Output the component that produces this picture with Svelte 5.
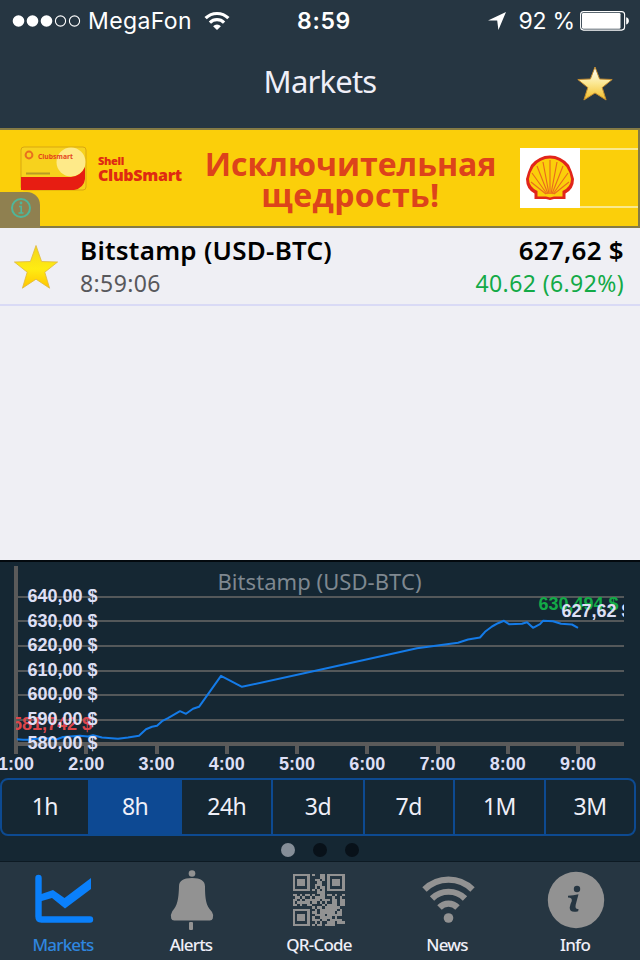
<script lang="ts">
  type Tab = 'markets' | 'alerts' | 'qr' | 'news' | 'info';

  const ranges = [
    { label: '1h', width: 86 },
    { label: '8h', width: 93 },
    { label: '24h', width: 91 },
    { label: '3d', width: 92 },
    { label: '7d', width: 90 },
    { label: '1M', width: 92 },
    { label: '3M', width: 90 }
  ];
  let activeRange = '8h';

  const tabs: { id: Tab; label: string }[] = [
    { id: 'markets', label: 'Markets' },
    { id: 'alerts', label: 'Alerts' },
    { id: 'qr', label: 'QR-Code' },
    { id: 'news', label: 'News' },
    { id: 'info', label: 'Info' }
  ];
  let activeTab: Tab = 'markets';

  const prices = [640, 630, 620, 610, 600, 590, 580];
  const hours = [1, 2, 3, 4, 5, 6, 7, 8, 9];

  const priceY = (price: number) => 182 - (price - 580) * 2.45;
  const hourX = (hour: number) => 16.5 + (hour - 1) * 70.25;

  const line = [
    [17, 177.7], [23, 178.3], [28, 178.3], [43, 176.5], [57, 177.7], [63, 175.5],
    [80, 174.3], [88, 175], [93, 173.7], [102, 176], [118, 177.3], [128, 176],
    [139, 174.3], [146, 167.7], [152, 165.3], [157, 164.3], [162, 159.7], [168, 156.7],
    [180, 149.7], [186, 152.3], [193, 147.3], [199, 145.3], [221, 114.3], [242, 125.3],
    [320, 108.3], [417, 86.7], [458, 81.3], [468, 78], [480, 76], [485, 70.3],
    [492, 65], [498, 61.7], [504, 59.3], [509, 62.7], [522, 62.3], [527, 60.7],
    [533, 66.3], [540, 62.7], [543, 59.3], [553, 59.7], [561, 62.3], [572, 63], [578, 66.3]
  ].map(([x, y]) => `${x},${y - 0.5}`).join(' ');

  const qr = [
    '#######.#..##.#######',
    '#.....#....##.#.....#',
    '#.###.#..##.#.#.###.#',
    '#.###.#...##..#.###.#',
    '#.###.#..###..#.###.#',
    '#.....#..#.##.#.....#',
    '#######.#.#.#.#######',
    '..........###........',
    '##.#.##.#..##.##.#..#',
    '.##.#..#.####...#..#.',
    '##.#.######.###.##.##',
    '#.#####.##.#.#..##.##',
    '##.#..##....#.####.##',
    '........#.##.######..',
    '#######..#.#######.#.',
    '#.....#.##.######.##.',
    '#.###.#..####.######.',
    '#.###.#.#..#####.#...',
    '#.###.#.###.##.#####.',
    '#.....#..#.#..###.###',
    '#######.#.##.####....'
  ];

  // outer ends of the grooves on the shell
  const ribs = [[11, 34], [12, 25], [17, 18], [23, 14], [30, 12], [37, 14], [43, 18], [48, 25], [49, 34]];
</script>

<div class="screen">
  <header>
    <div class="status">
      <div class="carrier">
        <svg width="69" height="14" viewBox="0 0 69 14">
          {#each [0, 1, 2, 3, 4] as i}
            {#if i < 3}
              <circle cx={6.5 + i * 14} cy="7" r="5.8" fill="#fff" />
            {:else}
              <circle cx={6.5 + i * 14} cy="7" r="5.1" fill="none" stroke="#fff" stroke-width="1.1" />
            {/if}
          {/each}
        </svg>
        <span>MegaFon</span>
        <svg width="26" height="20" viewBox="0 0 26 20" fill="none" stroke="#fff" stroke-width="3.2">
          <path d="M1.6 7.2a16.2 16.2 0 0 1 22.8 0" />
          <path d="M5.9 11.6a10 10 0 0 1 14.2 0" />
          <path d="M13 19l-3.900-3.800a5.500 5.500 0 0 1 7.800 0z" fill="#fff" stroke="none" />
        </svg>
      </div>
      <div class="clock">8:59</div>
      <div class="power">
        <svg width="20" height="20" viewBox="0 0 20 20"><path d="M19 1L1 9.600h9.200L11.400 19z" fill="#fff" /></svg>
        <span>92 %</span>
        <svg width="50" height="20" viewBox="0 0 50 20">
          <rect x="0.6" y="0.6" width="44" height="18.5" rx="3" fill="none" stroke="#fff" stroke-width="1.1" />
          <rect x="2" y="2" width="38.5" height="15.7" rx="1.2" fill="#fff" />
          <path d="M46.200 6.200c3.600.8 3.600 6.400 0 7.200z" fill="#fff" />
        </svg>
      </div>
    </div>
    <div class="nav">
      <h1>Markets</h1>
      <svg class="fav" width="38" height="38" viewBox="0 0 38 38">
        <defs>
          <linearGradient id="gold" x1="0" y1="0" x2="0" y2="1">
            <stop offset="0" stop-color="#fff" />
            <stop offset="0.5" stop-color="#fbe791" />
            <stop offset="1" stop-color="#f3be28" />
          </linearGradient>
        </defs>
        <path d="M19 2l4.600 12 12.600.5-10 8.100 3.900 12.400L19 28 7.900 35l3.900-12.400-10-8.100 12.600-.5z" fill="url(#gold)" stroke="#c28b2e" stroke-width="1" />
      </svg>
    </div>
  </header>

  <div class="banner">
    <svg class="card" width="68" height="46" viewBox="0 0 68 46">
      <rect x="1" y="1" width="65" height="43" rx="3" fill="#f7d21d" stroke="#d9a711" />
      <circle cx="51" cy="16" r="14.5" fill="#fff0a5" opacity="0.8" />
      <path d="M1 31h50q10-1 14-10v12q-1 9-11 11H1z" fill="#e71d12" />
      <circle cx="9" cy="9" r="3.400" fill="none" stroke="#e9701f" stroke-width="2" />
      <text x="18" y="13" font-size="7.500" font-weight="bold" fill="#e4441b" textLength="35" lengthAdjust="spacingAndGlyphs">Clubsmart</text>
      <path d="M6 27.500h24" stroke="#b89b23" stroke-width="2" />
    </svg>
    <div class="club"><small>Shell</small><span>ClubSmart</span></div>
    <div class="slogan"><span>Исключительная</span><span class="second">щедрость!</span></div>
    <div class="pecten">
      <svg width="60" height="60" viewBox="0 0 60 60">
        <path d="M14.500 51v-5.500Q6 41 6 31 8 23 11 17 19 7.500 30 7.500T49 17q3 6 5 14 0 10-8.500 14.500V51H34l-4 1-4-1z" fill="#e1251b" />
        <path d="M17.500 48.500v-5.500Q9 39 9 31q1-7 4.500-12Q20 10.500 30 10.500T46.500 19Q50 24 51 31q0 8-8.500 12v5.500H34l-4 1-4-1z" fill="#fbcf0a" />
        {#each ribs as [x, y], i}
          <line x1={26 + i} y1="46" x2={x} y2={y} stroke="#ea6a1e" stroke-width="1.1" />
        {/each}
      </svg>
    </div>
    <div class="lines"></div>
    <div class="adinfo">
      <svg width="22" height="22" viewBox="0 0 22 22">
        <circle cx="11" cy="11" r="9" fill="none" stroke="#4fb69a" stroke-width="2" />
        <path d="M9 9.500h2.200v6.500M8.500 16h5" fill="none" stroke="#4fb69a" stroke-width="1.600" />
        <circle cx="11" cy="6" r="1.400" fill="#4fb69a" />
      </svg>
    </div>
  </div>

  <main>
    <div class="market">
      <svg width="48" height="48" viewBox="0 0 48 48">
        <defs>
          <linearGradient id="yellow" x1="0" y1="0" x2="0" y2="1">
            <stop offset="0" stop-color="#f2d51c" />
            <stop offset="0.55" stop-color="#ffec12" />
            <stop offset="1" stop-color="#ffc400" />
          </linearGradient>
        </defs>
        <path d="M24 1.500l5.600 16 16 .5-12.800 10.200 4.800 16L24 35.200l-13.600 9 4.800-16L2.400 18l16-.5z" fill="url(#yellow)" stroke="#dfb83e" stroke-width="0.8" />
      </svg>
      <div class="pair">
        <strong>Bitstamp (USD-BTC)</strong>
        <span>8:59:06</span>
      </div>
      <div class="quote">
        <strong>627,62 $</strong>
        <span>40.62 (6.92%)</span>
      </div>
    </div>
  </main>

  <section class="panel">
    <svg width="640" height="216" viewBox="0 0 640 216">
      <defs>
        <clipPath id="plot"><rect x="16" y="0" width="608" height="216" /></clipPath>
      </defs>
      <text class="title" x="217.5" y="28" textLength="204">Bitstamp (USD-BTC)</text>
      {#each prices as price}
        <rect x="16" y={Math.round(priceY(price)) - 1} width="608" height="2" fill="#54585a" />
      {/each}
      <rect x="14" y="4" width="4" height="180" fill="#5a5a5a" />
      <rect x="14" y="180" width="610" height="4" fill="#5a5a5a" />
      {#each hours as hour}
        <rect x={Math.floor(hourX(hour) - 2)} y="183" width="4" height="9" fill="#5a5a5a" />
        <text class="label" x={hourX(hour) - 0.5} y="208" text-anchor="middle" textLength="36">{hour}:00</text>
      {/each}
      <polyline points={line} fill="none" stroke="#147be8" stroke-width="2" stroke-linejoin="round" />
      <g clip-path="url(#plot)">
        <text class="label low" x="12" y="167.500">581,742 $</text>
        <text class="label high" x="538.500" y="48">630,494 $</text>
        <text class="label" x="561.500" y="55">627,62 $</text>
      </g>
      {#each prices as price}
        <text class="label" x="27.500" y={priceY(price) + 5.2}>{price},00 $</text>
      {/each}
    </svg>

    <div class="ranges">
      {#each ranges as range}
        <button
          class:active={activeRange === range.label}
          style="width: {range.width}px"
          on:click={() => (activeRange = range.label)}
        >{range.label}</button>
      {/each}
    </div>

    <div class="dots"><i class="on"></i><i></i><i></i></div>
  </section>

  <nav class="tabs">
    {#each tabs as tab}
      <button class="tab" class:active={activeTab === tab.id} on:click={() => (activeTab = tab.id)}>
        {#if tab.id === 'markets'}
          <svg width="64" height="64" viewBox="0 0 64 64" fill="none" stroke="#0a80fb">
            <path d="M7.500 11v38.500q0 3 3 3h48.500" stroke-width="6.400" stroke-linecap="round" stroke-linejoin="round" />
            <path d="M9 34.500V27.500L22 23l11.500 8L60 11v11L34 41.500 21 31z" fill="#0a80fb" stroke="none" />
          </svg>
        {:else if tab.id === 'alerts'}
          <svg width="64" height="64" viewBox="0 0 64 64" fill="#929292">
            <circle cx="33" cy="6.500" r="3.300" />
            <path d="M33 11c9 0 13 3 13 8.500C46 39 49.500 40 53 45q2 3 .8 6.500-.6 2-3 2H15.200q-2.400 0-3-2-1.200-3.500.8-6.500C16 40 19.500 39 20 19.500c0-5.500 4-8.500 13-8.500z" />
            <rect x="30" y="55" width="4" height="8" rx="1" />
          </svg>
        {:else if tab.id === 'qr'}
          <svg width="64" height="64" viewBox="0 0 64 64" fill="#929292" shape-rendering="crispEdges">
            <g transform="translate(5.500 7) scale(2.480)">
              {#each qr as row, y}
                {#each row as cell, x}
                  {#if cell === '#'}
                    <rect {x} {y} width="1" height="1" />
                  {/if}
                {/each}
              {/each}
            </g>
          </svg>
        {:else if tab.id === 'news'}
          <svg width="64" height="64" viewBox="0 0 64 64" fill="none" stroke="#929292" stroke-width="6.200" stroke-linejoin="round">
            <path d="M9.500 22.500a34 34 0 0 1 48 0" />
            <path d="M17 31.500a23.500 23.500 0 0 1 33 0" />
            <path d="M24.500 40.500a12.500 12.500 0 0 1 18 0" />
            <circle cx="33.500" cy="51" r="4.800" fill="#929292" stroke="none" />
          </svg>
        {:else}
          <svg width="64" height="64" viewBox="0 0 64 64">
            <circle cx="33" cy="33" r="28.200" fill="#929292" />
            <circle cx="34" cy="22" r="3.200" fill="#263642" />
            <path d="M25 28.800q5.500-.5 10.500-1.500l-2.800 10.500q-1 4.700 2.800 4.200l-.3 2.200q-8.700 2-8.500-3.700.3-3 2-6.300 1-3.500-3.700-3.800z" fill="#263642" />
          </svg>
        {/if}
        <span>{tab.label}</span>
      </button>
    {/each}
  </nav>
</div>

<style>
  :global(body) {
    margin: 0;
    background: #efeff4;
  }

  .screen {
    width: 640px;
    height: 960px;
    display: flex;
    flex-direction: column;
    overflow: hidden;
    font-family: "Noto Sans", sans-serif;
    color: #efeff8;
  }

  svg {
    display: block;
    flex: none;
  }

  header {
    height: 128px;
    background: #263642;
  }

  .status {
    display: grid;
    grid-template-columns: 240px 1fr 240px;
    align-items: center;
    height: 41px;
    font-family: Inter, sans-serif;
    font-size: 23px;
    color: #fff;
  }

  .carrier {
    display: flex;
    align-items: center;
    padding-left: 12px;
  }

  .carrier span {
    margin: 0 12px 0 7px;
    letter-spacing: 0.4px;
  }

  .clock {
    margin-left: 8px;
    text-align: center;
    font-weight: 600;
    letter-spacing: 0.7px;
  }

  .power {
    display: flex;
    align-items: center;
    justify-content: flex-end;
    padding-right: 10px;
  }

  .power span {
    margin: 0 5px 0 11px;
    letter-spacing: -0.2px;
    white-space: nowrap;
  }

  .nav {
    display: grid;
    grid-template-columns: 1fr auto 1fr;
    align-items: center;
    height: 80px;
  }

  h1 {
    grid-column: 2;
    margin: 0;
    font-size: 31px;
    font-weight: 400;
    letter-spacing: -0.8px;
  }

  .fav {
    justify-self: end;
    margin: 6px 26px 0 0;
  }

  .banner {
    position: relative;
    box-sizing: border-box;
    display: flex;
    height: 100px;
    border: 2px solid #857b45;
    border-left: 0;
    background: #fbcf0a;
    color: #dd431b;
    font-family: "Open Sans", sans-serif;
  }

  .card {
    margin: 16px 0 0 20px;
  }

  .club {
    display: flex;
    flex-direction: column;
    width: 105px;
    margin: 23px 0 0 10px;
    color: #df2a12;
    font: 800 16px/15px "Open Sans", sans-serif;
    letter-spacing: -0.3px;
  }

  .club small {
    font-size: 11px;
    line-height: 15px;
  }

  .slogan {
    display: flex;
    flex-direction: column;
    width: 295px;
    padding-top: 18px;
    text-align: center;
    font-size: 32px;
    font-weight: 700;
    line-height: 31px;
    white-space: nowrap;
  }

  .slogan .second {
    letter-spacing: 0.4px;
  }

  .pecten {
    width: 60px;
    height: 60px;
    margin: 18px 0 0 22px;
    background: #fff;
  }

  .lines {
    flex: 1;
    height: 56px;
    margin-top: 18px;
    border: solid #fae98d;
    border-width: 2px 0;
  }

  .adinfo {
    position: absolute;
    left: 0;
    bottom: -2px;
    display: flex;
    align-items: center;
    justify-content: center;
    box-sizing: border-box;
    width: 40px;
    height: 36px;
    padding: 0 0 4px 2px;
    border-radius: 0 13px 0 0;
    background: #8f8050;
  }

  main {
    flex: 1;
    background: #efeff4;
  }

  .market {
    display: flex;
    height: 76px;
    border-bottom: 2px solid #d9daf5;
  }

  .market svg {
    margin: 16px 20px 0 12px;
  }

  .pair,
  .quote {
    display: flex;
    flex-direction: column;
    padding-top: 5px;
  }

  .pair {
    flex: 1;
  }

  .quote {
    padding-right: 16px;
    text-align: right;
  }

  .market strong {
    font-size: 26px;
    font-weight: 600;
    line-height: 34px;
    letter-spacing: 0.25px;
    color: #000;
  }

  .market span {
    font-size: 23px;
    line-height: 32px;
    letter-spacing: 0.4px;
    color: #58585c;
  }

  .market .quote span {
    color: #13aa47;
  }

  .panel {
    box-sizing: border-box;
    height: 301px;
    border-top: 2px solid #03090e;
    background: #152733;
  }

  .title {
    font-size: 22px;
    fill: #7f8890;
  }

  .label {
    font-family: "Liberation Sans", sans-serif;
    font-size: 18px;
    font-weight: bold;
    fill: #dddff5;
  }

  .low {
    fill: #dc464b;
  }

  .high {
    fill: #13aa47;
  }

  .ranges {
    box-sizing: border-box;
    display: flex;
    width: 636px;
    height: 58px;
    border: 2px solid #0d4a91;
    border-radius: 8px;
    overflow: hidden;
  }

  button {
    padding: 0;
    border: 0;
    background: none;
    color: inherit;
    font: inherit;
  }

  .ranges button {
    box-sizing: border-box;
    border-left: 2px solid #0d4a91;
    padding-bottom: 3px;
    font-size: 23px;
    letter-spacing: -0.5px;
  }

  .ranges button:first-child {
    border-left: 0;
  }

  .ranges .active {
    background: #0d4993;
  }

  .dots {
    display: flex;
    justify-content: center;
    gap: 18px;
    padding-top: 7px;
  }

  .dots i {
    width: 14px;
    height: 14px;
    border-radius: 50%;
    background: #081119;
  }

  .dots .on {
    background: #858e98;
  }

  .tabs {
    box-sizing: border-box;
    display: grid;
    grid-template-columns: repeat(5, 1fr);
    height: 99px;
    border-top: 1px solid #0d1a23;
    background: #263642;
  }

  .tab {
    display: flex;
    flex-direction: column;
    align-items: center;
    padding: 5px 2px 0 0;
    font-size: 17px;
    font-weight: 500;
    line-height: 24px;
    letter-spacing: -0.8px;
  }

  .tab svg {
    margin-bottom: 2px;
  }

  .tab.active {
    color: #2f86df;
  }
</style>
